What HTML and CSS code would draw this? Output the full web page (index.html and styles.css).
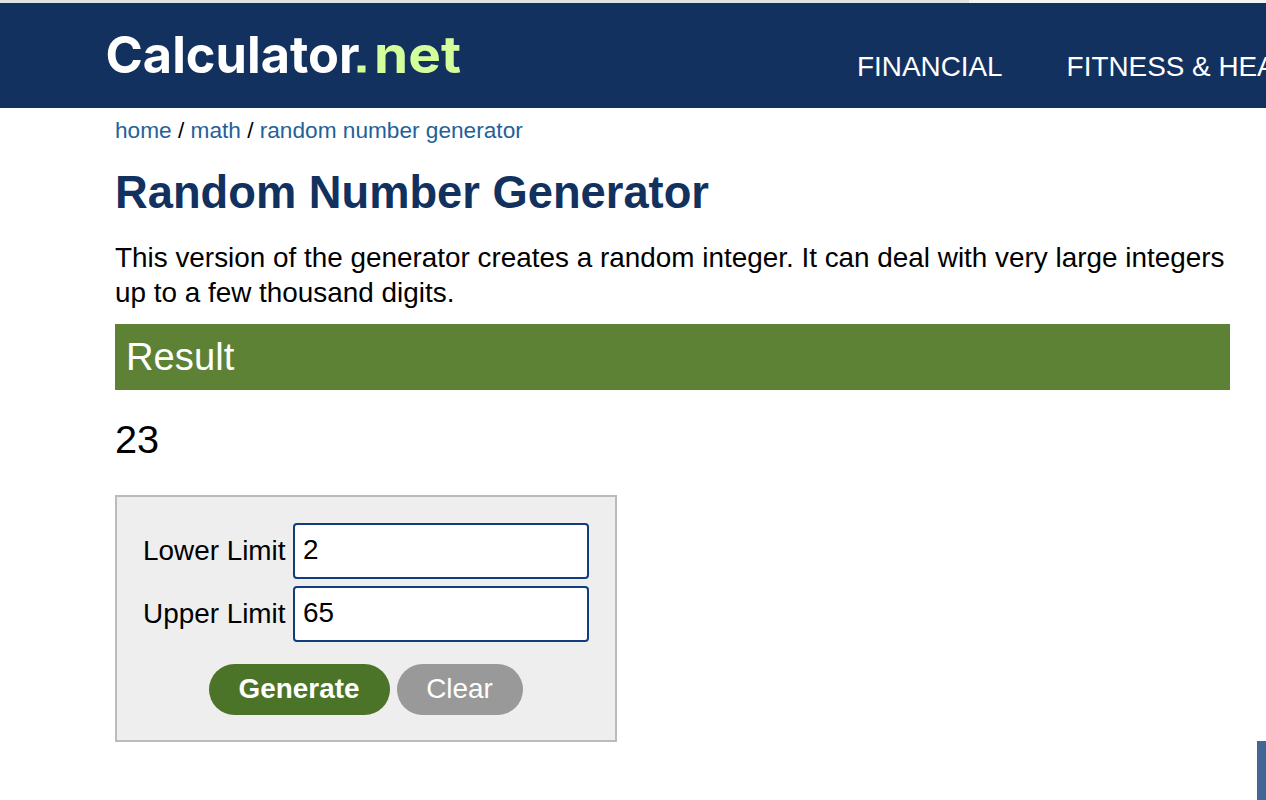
FILE: index.html
```html
<!DOCTYPE html>
<html lang="en">

<head>
    <meta charset="UTF-8">
    <meta name="viewport" content="width=device-width, initial-scale=1.0">
    <title>Random Number Generator</title>
    <link rel="stylesheet" href="styles.css">
</head>

<body>

    <div class="load-bar">
        <div class="load-progress"></div>
    </div>

    <header class="header">
        <a class="logo" href="#">
            <svg width="360" height="50" viewBox="0 0 360 50" role="img" aria-label="Calculator.net">
                <text class="logo-main" x="-2.5" y="42.5" textLength="254" lengthAdjust="spacingAndGlyphs">Calculator</text>
                <rect class="logo-dot" x="249.5" y="35.5" width="8" height="7" />
                <text class="logo-net" x="266" y="42.5" textLength="87" lengthAdjust="spacingAndGlyphs">net</text>
            </svg>
        </a>
        <nav class="menu">
            <a href="#">FINANCIAL</a>
            <a href="#">FITNESS &amp; HEALTH</a>
        </nav>
    </header>

    <main class="content">
        <div class="breadcrumbs"><a href="#">home</a> / <a href="#">math</a> / <a href="#">random number generator</a></div>

        <h1>Random Number Generator</h1>
        <p class="description">This version of the generator creates a random integer. It can deal with very large integers up to a few thousand digits.</p>

        <h2 class="result-title">Result</h2>
        <p class="result" id="result">23</p>

        <form class="panel" id="generatorForm">
            <div class="form-row">
                <label for="lower">Lower Limit</label>
                <input type="text" id="lower" value="2">
            </div>
            <div class="form-row">
                <label for="upper">Upper Limit</label>
                <input type="text" id="upper" value="65">
            </div>
            <div class="buttons">
                <button type="button" class="generate-btn">Generate</button>
                <button type="button" class="clear-btn">Clear</button>
            </div>
        </form>
    </main>

    <a class="side-tab" href="#" aria-label="Back to top"></a>

</body>

</html>
```
FILE: styles.css
```css
body {
    margin: 0;
    background-color: #fff;
    color: #000;
    font-family: "Liberation Sans", Arial, sans-serif;
    font-size: 27.88px;
    line-height: 35px;
    overflow: hidden;
}

a {
    color: #1f6299;
    text-decoration: none;
}

.load-bar {
    height: 3px;
    background-color: #f2f4f3;
}

.load-progress {
    width: 969px;
    height: 3px;
    background-color: #e0e3e1;
}

.header {
    display: flex;
    height: 105px;
    padding-left: 108px;
    background-color: #13315f;
}

.logo {
    flex: none;
    width: 749px;
    padding-top: 27px;
}

.logo svg {
    display: block;
    overflow: visible;
}

.logo-main,
.logo-net {
    font-family: Inter, "Liberation Sans", sans-serif;
    font-size: 51.5px;
    font-weight: 700;
    fill: #fff;
}

.logo-net,
.logo-dot {
    fill: #d4fd9c;
}

.menu {
    display: flex;
    flex: none;
    gap: 64px;
    padding-top: 46px;
    white-space: nowrap;
}

.menu a {
    color: #fff;
}

.content {
    width: 1115px;
    padding: 8px 0 0 115px;
}

.breadcrumbs {
    font-size: 22.65px;
    line-height: 28px;
}

h1 {
    margin: 21px 0 19px;
    color: #13315f;
    font-size: 45.3px;
    line-height: 56px;
}

.description {
    margin: 0 0 14px;
}

.result-title {
    margin: 0 0 25px;
    padding: 0 11px;
    background-color: #5d8235;
    color: #fff;
    font-size: 38.2px;
    font-weight: normal;
    line-height: 66px;
}

.result {
    margin: 0 0 32px;
    font-size: 39.7px;
    line-height: 48px;
}

.panel {
    box-sizing: border-box;
    width: 502px;
    height: 247px;
    padding: 26px 26px 0;
    border: 2px solid #b9bcbb;
    background-color: #eee;
}

.form-row {
    display: flex;
    align-items: center;
    justify-content: space-between;
    margin-bottom: 7px;
}

.form-row label {
    padding-bottom: 2px;
}

.form-row input {
    box-sizing: border-box;
    width: 296px;
    height: 56px;
    padding: 0 8px 2px;
    border: 2px solid #123c80;
    border-radius: 4px;
    background-color: #fff;
    color: #000;
    font: inherit;
}

.buttons {
    display: flex;
    justify-content: center;
    gap: 7px;
    margin-top: 22px;
}

.buttons button {
    height: 51px;
    padding: 0 1px 2px 0;
    border: none;
    border-radius: 26px;
    color: #fff;
    font: inherit;
    cursor: pointer;
}

.buttons .generate-btn {
    width: 181px;
    background-color: #4c7428;
    font-weight: bold;
}

.buttons .clear-btn {
    width: 126px;
    background-color: #999;
}

.side-tab {
    position: fixed;
    right: 0;
    bottom: 0;
    width: 9px;
    height: 59px;
    background-color: #426695;
}
```
